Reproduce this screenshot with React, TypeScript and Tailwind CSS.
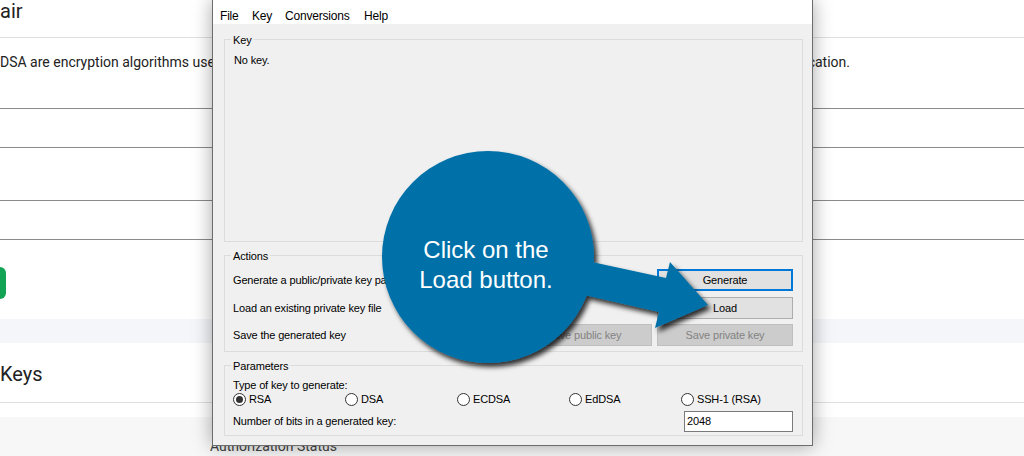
import type { ReactNode } from 'react';

function Btn({ children, kind = 'normal' }: { children: ReactNode; kind?: 'normal' | 'default' | 'disabled' }) {
  const look =
    kind === 'default'
      ? 'border-2 border-[#0078d7] bg-[#e1e1e1] text-black'
      : kind === 'disabled'
        ? 'border border-[#bfbfbf] bg-[#cccccc] text-[#838383]'
        : 'border border-[#adadad] bg-[#e1e1e1] text-black';
  return (
    <div className={`flex h-[22px] w-[136px] items-center justify-center ${look}`}>{children}</div>
  );
}

function Radio({ label, checked }: { label: string; checked?: boolean }) {
  return (
    <div className="flex w-[112.5px] items-center gap-[3px]">
      <span className="flex h-[13px] w-[13px] items-center justify-center rounded-full border border-[#333] bg-white">
        {checked && <span className="h-[7px] w-[7px] rounded-full bg-[#333]" />}
      </span>
      <span>{label}</span>
    </div>
  );
}

function GroupLabel({ children }: { children: ReactNode }) {
  return <div className="-mt-[7px] ml-[6px] w-fit bg-[#f0f0f0] px-[2px] leading-[14px]">{children}</div>;
}

function PuttyGen() {
  return (
    <div className="absolute left-[212px] top-0 flex h-[446px] w-[601px] flex-col border-x border-b border-[#6d6d6d] bg-[#f0f0f0] font-['Liberation_Sans',Arial,sans-serif] text-[11px] tracking-[-0.15px] text-black shadow-[0_0_18px_rgba(0,0,0,0.35)]">
      {/* menu bar */}
      <div className="flex h-[24px] bg-white pl-[7px] pt-[8px] text-[12px] leading-[16px] tracking-[-0.2px]">
        <span className="w-[32px]">File</span>
        <span className="w-[33px]">Key</span>
        <span className="w-[79px]">Conversions</span>
        <span>Help</span>
      </div>

      <div className="flex flex-col pl-[11px] pr-[9px]">
        {/* Key */}
        <div className="mt-[15px] h-[203px] border border-[#dcdcdc]">
          <GroupLabel>Key</GroupLabel>
          <div className="mt-[6px] pl-[9px] leading-[14px]">No key.</div>
        </div>

        {/* Actions */}
        <div className="mt-[13px] h-[97px] border border-[#dcdcdc] pl-[8px] pr-[9px]">
          <div className="-ml-[8px]">
            <GroupLabel>Actions</GroupLabel>
          </div>
          <div className="mt-[6px] flex items-center justify-between">
            <span>Generate a public/private key pair</span>
            <Btn kind="default">Generate</Btn>
          </div>
          <div className="mt-[6px] flex items-center justify-between">
            <span>Load an existing private key file</span>
            <Btn>Load</Btn>
          </div>
          <div className="mt-[5px] flex items-center">
            <span className="flex-1">Save the generated key</span>
            <div className="mr-[5px]">
              <Btn kind="disabled">Save public key</Btn>
            </div>
            <Btn kind="disabled">Save private key</Btn>
          </div>
        </div>

        {/* Parameters */}
        <div className="mt-[13px] h-[71px] border border-[#dcdcdc] pl-[8px] pr-[9px]">
          <div className="-ml-[8px]">
            <GroupLabel>Parameters</GroupLabel>
          </div>
          <div className="mt-[5px] leading-[14px]">Type of key to generate:</div>
          <div className="flex h-[14px] items-center">
            <Radio label="RSA" checked />
            <Radio label="DSA" />
            <Radio label="ECDSA" />
            <Radio label="EdDSA" />
            <Radio label="SSH-1 (RSA)" />
          </div>
          <div className="mt-[5px] flex items-center justify-between">
            <span>Number of bits in a generated key:</span>
            <div className="flex h-[21px] w-[109px] items-center border border-[#7a7a7a] bg-white pl-[2px]">2048</div>
          </div>
        </div>
      </div>
    </div>
  );
}

function Callout() {
  return (
    <>
      <svg className="absolute left-0 top-0" width="1024" height="456" viewBox="0 0 1024 456">
        <defs>
          <filter id="callout-shadow" x="-20%" y="-20%" width="140%" height="140%">
            <feDropShadow dx="3" dy="4" stdDeviation="2.5" floodColor="#000" floodOpacity="0.8" />
          </filter>
        </defs>
        <g filter="url(#callout-shadow)" fill="#0071a8">
          <polygon points="578,259 666,278 670,262 708,305 655,328 659,312 571,292" />
          <circle cx="488" cy="257" r="106" />
        </g>
      </svg>
      <div className="absolute left-[386px] top-[235px] w-[200px] text-center font-['Liberation_Sans',Arial,sans-serif] text-[24px] leading-[30px] text-white">
        Click on the
        <br />
        Load button.
      </div>
    </>
  );
}

export default function App() {
  return (
    <div className="relative h-[456px] w-[1024px] overflow-hidden bg-white font-['Roboto',sans-serif] text-[#222]">
      {/* page behind the dialog */}
      <div className="flex h-full flex-col">
        <div className="h-[38px] shrink-0 border-b border-[#e0e0e0] text-[20px] leading-[22px]">air</div>
        <div className="h-[71px] shrink-0 border-b border-[#8a8a8a] pt-[14px] text-[14px] leading-[20px]">
          <div className="flex w-[850px] justify-between">
            <span>DSA are encryption algorithms used</span>
            <span>cation.</span>
          </div>
        </div>
        <div className="h-[39px] shrink-0 border-b border-[#8a8a8a]" />
        <div className="h-[53px] shrink-0 border-b border-[#8a8a8a]" />
        <div className="h-[39px] shrink-0 border-b border-[#8a8a8a]" />
        <div className="h-[79px] shrink-0 pt-[27px]">
          <div className="h-[32px] w-[6px] rounded-r-[6px] bg-[#12a454]" />
        </div>
        <div className="h-[24px] shrink-0 bg-[#f5f6fa]" />
        <div className="h-[60px] shrink-0 border-b border-[#e0e0e0] pt-[19px] text-[20px] leading-[24px]">Keys</div>
        <div className="h-[14px] shrink-0" />
        <div className="flex-1 bg-[#f7f7f7] pl-[210px] pt-[19px] text-[14px] leading-[20px] text-[#444]">
          Authorization Status
        </div>
      </div>

      <PuttyGen />
      <Callout />
    </div>
  );
}
